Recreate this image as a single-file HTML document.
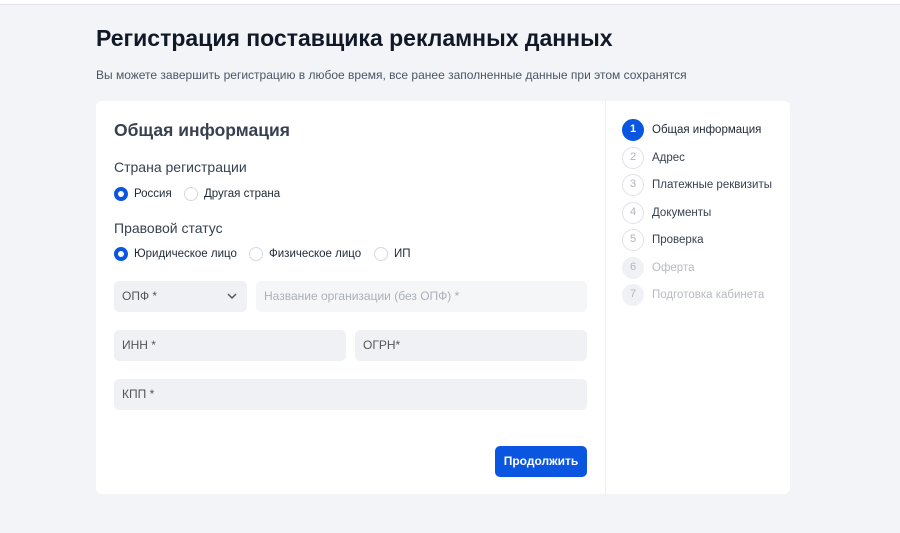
<!DOCTYPE html><html><head><meta charset="utf-8"><style>
*{box-sizing:border-box;margin:0;padding:0}
body{width:900px;height:533px;background:#f3f4f7;font-family:"Liberation Sans",sans-serif;position:relative;overflow:hidden;color:#1f2937}
.a{position:absolute;white-space:nowrap}
.top{position:absolute;left:0;top:0;width:900px;height:5px;background:#fff;border-bottom:1px solid #e3e5ea}
.card{position:absolute;left:96px;top:101px;width:694px;height:393px;background:#fff;border-radius:6px}
.div{position:absolute;left:605px;top:101px;width:1px;height:393px;background:#eceef2}
.r{position:absolute;width:14px;height:14px;border-radius:50%;border:1.5px solid #d5d8de;background:#fff}
.r.on{border:4px solid #0a56e0}
.f{position:absolute;background:#eff1f5;border-radius:5px;font-size:12px;color:#555;padding-left:8px;line-height:31px;height:31px}
.s{position:absolute;left:622px;width:22px;height:22px;border-radius:50%;border:1.5px solid #dfe2e7;font-size:11px;color:#b0b4bb;text-align:center;line-height:19px}
.st{position:absolute;left:652px;font-size:11.5px;color:#374151}
</style></head><body>
<div class="top"></div>
<div class="a" style="left:96px;top:25px;font-size:23px;font-weight:bold;color:#111827">Регистрация поставщика рекламных данных</div>
<div class="a" style="left:96px;top:68px;font-size:12px;color:#4b5563">Вы можете завершить регистрацию в любое время, все ранее заполненные данные при этом сохранятся</div>
<div class="card"></div><div class="div"></div>
<div class="a" style="left:114px;top:120px;font-size:17.5px;font-weight:bold;color:#374151">Общая информация</div>
<div class="a" style="left:114px;top:159px;font-size:14px;color:#374151">Страна регистрации</div>
<div class="r on" style="left:114px;top:187px"></div><div class="a" style="left:134px;top:188px;font-size:11.5px">Россия</div>
<div class="r" style="left:184px;top:187px"></div><div class="a" style="left:204px;top:188px;font-size:11.5px">Другая страна</div>
<div class="a" style="left:114px;top:220px;font-size:14px;color:#374151">Правовой статус</div>
<div class="r on" style="left:114px;top:247px"></div><div class="a" style="left:134px;top:248px;font-size:11.5px">Юридическое лицо</div>
<div class="r" style="left:249px;top:247px"></div><div class="a" style="left:269px;top:248px;font-size:11.5px">Физическое лицо</div>
<div class="r" style="left:374px;top:247px"></div><div class="a" style="left:394px;top:248px;font-size:11.5px">ИП</div>
<div class="f" style="left:114px;top:281px;width:133px">ОПФ *<svg style="position:absolute;right:10px;top:12px" width="10" height="7" viewBox="0 0 10 7"><path d="M1 1l4 4 4-4" fill="none" stroke="#555" stroke-width="1.5"/></svg></div>
<div class="f" style="left:256px;top:281px;width:331px;background:#f5f6f8;color:#aab0b8">Название организации (без ОПФ) *</div>
<div class="f" style="left:114px;top:330px;width:232px">ИНН *</div>
<div class="f" style="left:355px;top:330px;width:232px">ОГРН*</div>
<div class="f" style="left:114px;top:379px;width:473px">КПП *</div>
<div class="a" style="left:495px;top:446px;width:92px;height:31px;background:#0a56e0;border-radius:5px;color:#fff;font-size:12px;font-weight:bold;text-align:center;line-height:31px">Продолжить</div>
<div class="s" style="top:119px;background:#0a56e0;border-color:#0a56e0;color:#fff;font-weight:bold">1</div><div class="st" style="top:124px;color:#1f2937">Общая информация</div>
<div class="s" style="top:147px">2</div><div class="st" style="top:152px">Адрес</div>
<div class="s" style="top:174px">3</div><div class="st" style="top:179px">Платежные реквизиты</div>
<div class="s" style="top:202px">4</div><div class="st" style="top:207px">Документы</div>
<div class="s" style="top:229px">5</div><div class="st" style="top:234px">Проверка</div>
<div class="s" style="top:257px;background:#f0f1f4;border-color:#f0f1f4">6</div><div class="st" style="top:262px;color:#b6bac1">Оферта</div>
<div class="s" style="top:284px;background:#f0f1f4;border-color:#f0f1f4">7</div><div class="st" style="top:289px;color:#b6bac1">Подготовка кабинета</div>
</body></html>
